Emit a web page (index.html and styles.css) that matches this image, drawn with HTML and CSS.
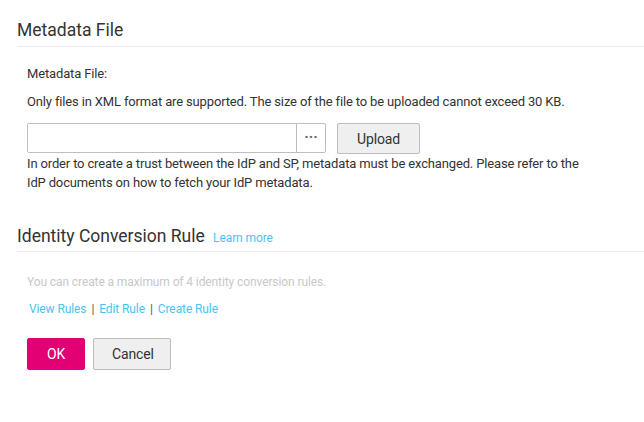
FILE: index.html
```html
<!DOCTYPE html>
<html lang="en">
<head>
<meta charset="UTF-8">
<meta name="viewport" content="width=device-width, initial-scale=1.0">
<title>Identity Provider</title>
<link rel="stylesheet" href="styles.css">
</head>
<body>

<div class="section">
  <div class="section-title">Metadata File</div>
  <div class="section-body">
    <div class="label">Metadata File:</div>
    <div class="tip">Only files in XML format are supported. The size of the file to be uploaded cannot exceed 30 KB.</div>
    <div class="upload-row">
      <div class="file-box">
        <input class="file-input" type="text">
        <span class="browse">&middot;&middot;&middot;</span>
      </div>
      <button class="btn">Upload</button>
    </div>
    <div class="help">In order to create a trust between the IdP and SP, metadata must be exchanged. Please refer to the IdP documents on how to fetch your IdP metadata.</div>
  </div>
</div>

<div class="section">
  <div class="section-title">Identity Conversion Rule <a class="learn" href="#">Learn more</a></div>
  <div class="section-body">
    <div class="muted">You can create a maximum of 4 identity conversion rules.</div>
    <div class="links">
      <a href="#">View Rules</a><span class="sep">|</span><a href="#">Edit Rule</a><span class="sep">|</span><a href="#">Create Rule</a>
    </div>
  </div>
</div>

<div class="actions">
  <button class="btn btn-primary">OK</button>
  <button class="btn">Cancel</button>
</div>

</body>
</html>
```

FILE: styles.css
```css
* {
  box-sizing: border-box;
}
body {
  font-family: Roboto, "Liberation Sans", sans-serif;
  font-size: 13px;
  letter-spacing: -0.15px;
  color: #333;
  margin: 0;
  padding: 0 0 0 17px;
}
a {
  color: #4cc2f1;
  text-decoration: none;
}
.section-title {
  font-size: 17.5px;
  letter-spacing: 0;
  line-height: 24px;
  height: 47px;
  padding-top: 18px;
  border-bottom: 1px solid #ebebeb;
}
.learn {
  font-size: 12px;
  line-height: 18px;
  letter-spacing: -0.1px;
  margin-left: 4px;
}
.section-body {
  padding-left: 10px;
}
.label {
  margin-top: 18px;
  line-height: 18px;
}
.tip {
  margin-top: 10px;
  line-height: 18px;
}
.upload-row {
  display: flex;
  margin-top: 12px;
}
.file-box {
  display: flex;
  width: 299px;
  height: 30px;
  border: 1px solid #bdbdbd;
  border-radius: 2px;
}
.file-input {
  flex: 1;
  border: none;
  outline: none;
  min-width: 0;
}
.browse {
  width: 29px;
  border-left: 1px solid #bdbdbd;
  text-align: center;
  line-height: 26px;
  font-size: 15px;
  font-weight: bold;
  letter-spacing: 0;
  color: #666;
}
.btn {
  height: 31px;
  min-width: 78px;
  padding: 0 18px;
  font-family: Roboto, "Liberation Sans", sans-serif;
  font-size: 14px;
  letter-spacing: -0.15px;
  color: #333;
  background-color: #efefef;
  border: 1px solid #bdbdbd;
  border-radius: 2px;
}
.upload-row .btn {
  margin-left: 11px;
  width: 83px;
}
.help {
  width: 560px;
  line-height: 19px;
}
.section + .section .section-title {
  height: 60px;
  padding-top: 32px;
}
.muted {
  margin-top: 21px;
  font-size: 12px;
  letter-spacing: -0.1px;
  color: #c8c8c8;
  line-height: 18px;
}
.links {
  margin-top: 9px;
  padding-left: 2px;
  font-size: 12px;
  letter-spacing: -0.1px;
  line-height: 18px;
}
.sep {
  color: #555;
  margin: 0 5px;
}
.actions {
  display: flex;
  gap: 8px;
  padding-left: 10px;
  margin-top: 20px;
}
.btn-primary {
  background-color: #e20074;
  border-color: #e20074;
  color: #fff;
  min-width: 58px;
}
.actions .btn {
  height: 32px;
}
.actions .btn + .btn {
  width: 78px;
}
```
